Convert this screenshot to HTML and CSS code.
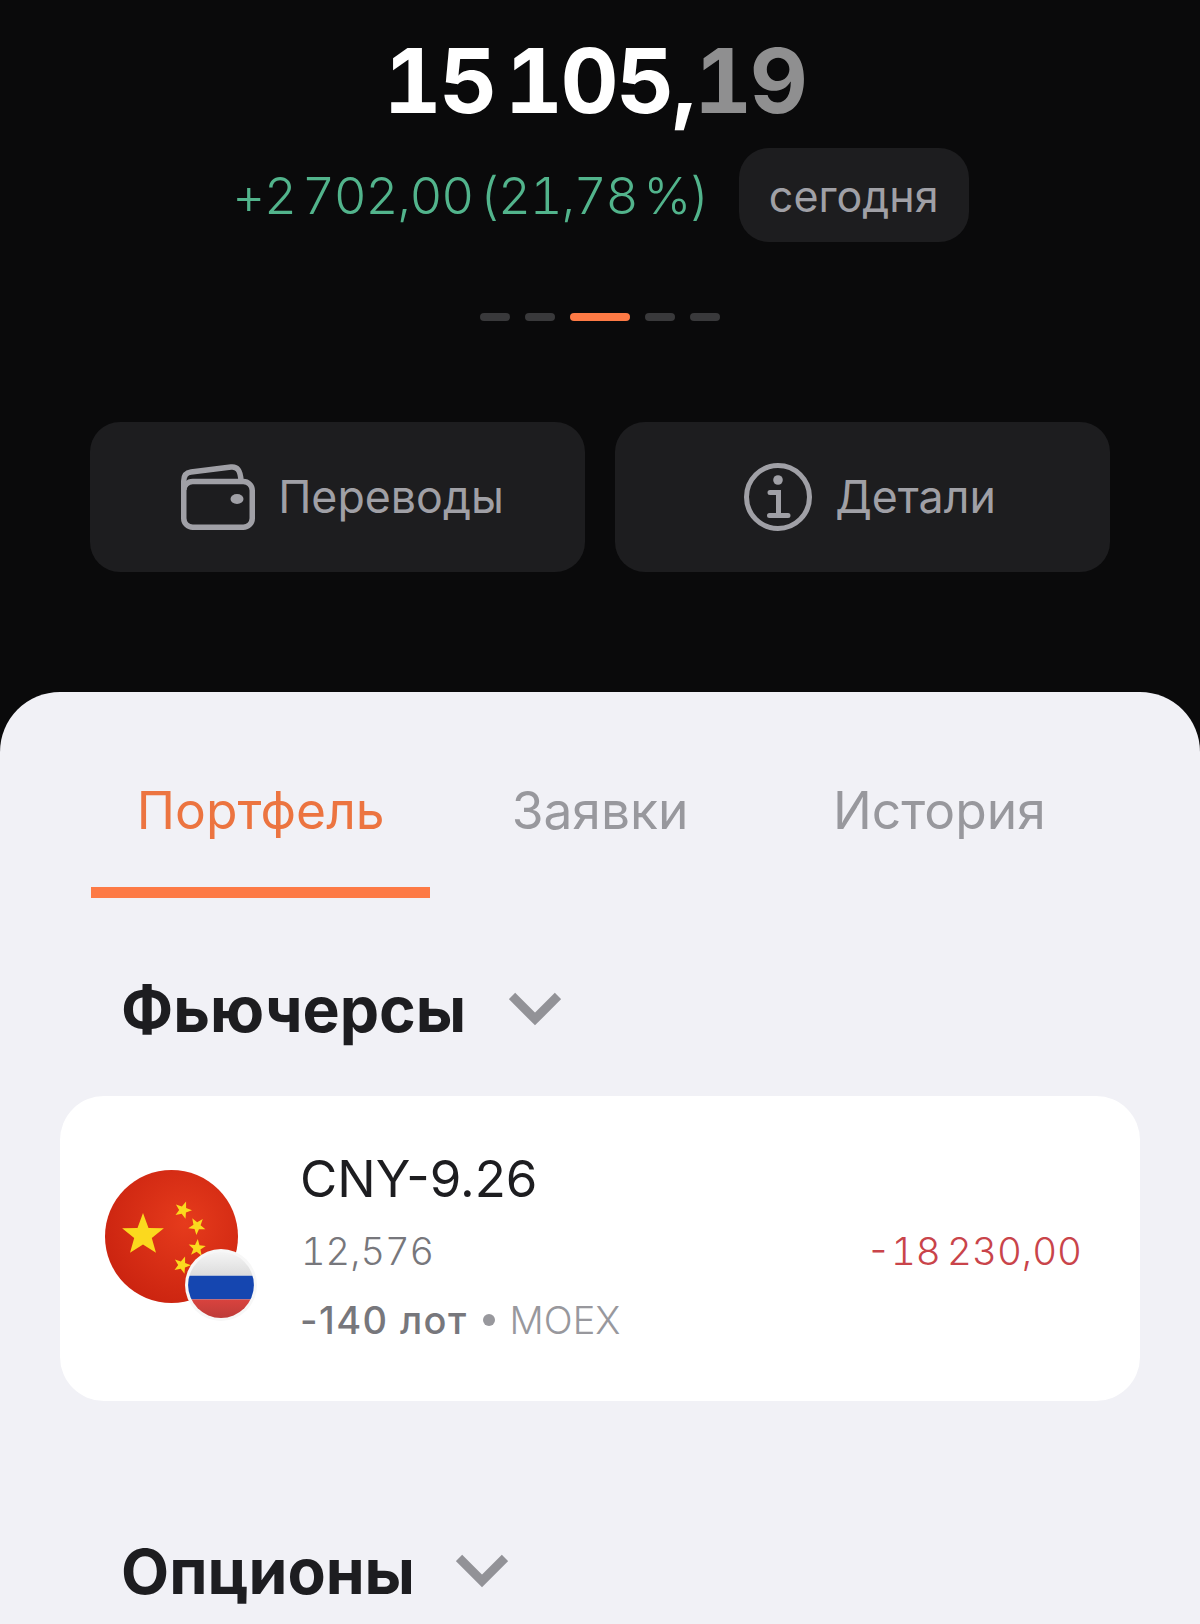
FILE: index.html
```html
<!DOCTYPE html>
<html lang="ru">
<head>
  <meta charset="UTF-8" />
  <meta name="viewport" content="width=device-width, initial-scale=1.0" />
  <title>Портфель</title>
  <link rel="stylesheet" href="styles.css">
</head>
<body>
  <div class="screen">
    <div class="top">
      <div class="balance">15 105,<span class="cents">19</span></div>
      <div class="change-row">
        <span class="change">+2 702,00 (21,78 %)</span>
        <span class="period">сегодня</span>
      </div>
      <div class="dots">
        <span class="dot"></span>
        <span class="dot"></span>
        <span class="dot active"></span>
        <span class="dot"></span>
        <span class="dot"></span>
      </div>
      <div class="actions">
        <div class="action">
          <svg class="wallet-icon" viewBox="0 0 74 66" fill="none" stroke="#a0a0a6" stroke-width="5.5">
            <rect x="2.75" y="17.5" width="68.5" height="45.75" rx="9" />
            <path d="M2.75 26V17C2.75 11 6 8.5 10 8L50 3C56 2.3 59.5 6 60 17" />
            <ellipse cx="56" cy="35" rx="6.5" ry="5" fill="#a0a0a6" stroke="none" />
          </svg>
          <span>Переводы</span>
        </div>
        <div class="action">
          <svg class="info-icon" viewBox="0 0 68 68" fill="none" stroke="#a0a0a6" stroke-width="5">
            <circle cx="34" cy="34" r="31.5" />
            <circle cx="34" cy="17" r="4.8" fill="#a0a0a6" stroke="none" />
            <path d="M26 29.5H34.5V52M25.5 52.5H44" stroke-linecap="round" />
          </svg>
          <span>Детали</span>
        </div>
      </div>
    </div>

    <div class="sheet">
      <div class="tabs">
        <div class="tab active">Портфель</div>
        <div class="tab">Заявки</div>
        <div class="tab">История</div>
      </div>

      <div class="section-title">
        <span>Фьючерсы</span>
        <svg class="chevron" viewBox="0 0 52 34" fill="none" stroke="#929297" stroke-width="9">
          <path d="M3 4L26 27L49 4" />
        </svg>
      </div>

      <div class="card">
        <div class="flags">
          <svg class="flag-cn" viewBox="0 0 133 133">
            <defs>
              <radialGradient id="cnBg" cx="0.6" cy="0.4" r="0.7">
                <stop offset="0" stop-color="#e63b1c" />
                <stop offset="1" stop-color="#c9220f" />
              </radialGradient>
              <polygon id="star" points="0,-10 2.5,-3.2 9.5,-3.1 4,1.4 5.9,8.1 0,4.3 -5.9,8.1 -4,1.4 -9.5,-3.1 -2.5,-3.2" />
            </defs>
            <circle cx="66.5" cy="66.5" r="66.5" fill="url(#cnBg)" />
            <use href="#star" fill="#fbd91e" transform="translate(38 65) scale(2.2)" />
            <use href="#star" fill="#fbd91e" transform="translate(78 40) rotate(20) scale(0.9)" />
            <use href="#star" fill="#fbd91e" transform="translate(92 56) rotate(40) scale(0.9)" />
            <use href="#star" fill="#fbd91e" transform="translate(92 78) rotate(5) scale(0.9)" />
            <use href="#star" fill="#fbd91e" transform="translate(77 95) rotate(20) scale(0.9)" />
          </svg>
          <svg class="flag-ru" viewBox="0 0 70 70">
            <defs>
              <clipPath id="ruClip"><circle cx="35" cy="35" r="32" /></clipPath>
              <linearGradient id="ruWhite" x1="0" y1="0" x2="0" y2="1">
                <stop offset="0" stop-color="#f8f8f8" />
                <stop offset="1" stop-color="#dcdcdc" />
              </linearGradient>
              <linearGradient id="ruRed" x1="0" y1="0" x2="0" y2="1">
                <stop offset="0" stop-color="#d9433e" />
                <stop offset="1" stop-color="#b93a38" />
              </linearGradient>
            </defs>
            <circle cx="35" cy="35" r="35" fill="#f7f7f7" />
            <g clip-path="url(#ruClip)">
              <rect width="70" height="26" fill="url(#ruWhite)" />
              <rect y="26" width="70" height="23" fill="#1546b0" />
              <rect y="49" width="70" height="21" fill="url(#ruRed)" />
            </g>
          </svg>
        </div>
        <div class="info">
          <div class="ticker">CNY-9.26</div>
          <div class="price">12,576</div>
          <div class="meta"><b>-140 лот</b><i class="sep"></i>MOEX</div>
        </div>
        <div class="pnl">-18 230,00</div>
      </div>

      <div class="section-title options">
        <span>Опционы</span>
        <svg class="chevron" viewBox="0 0 52 34" fill="none" stroke="#929297" stroke-width="9">
          <path d="M3 4L26 27L49 4" />
        </svg>
      </div>
    </div>
  </div>
</body>
</html>
```

FILE: styles.css
```css
* {
  box-sizing: border-box;
}
body {
  margin: 0;
  font-family: Inter, Roboto, sans-serif;
  background: #0a0a0b;
}
.screen {
  width: 1200px;
  height: 1624px;
  overflow: hidden;
  display: flex;
  flex-direction: column;
}

.top {
  height: 692px;
  flex-shrink: 0;
  padding-top: 31px;
}
.balance {
  height: 100px;
  line-height: 100px;
  font-size: 90px;
  font-weight: 700;
  font-feature-settings: "tnum";
  color: #fff;
  text-align: center;
  letter-spacing: -2.4px;
  word-spacing: -12px;
  margin-left: -11px;
}
.cents {
  color: #8f8f90;
}
.change-row {
  display: flex;
  justify-content: center;
  align-items: center;
  gap: 30px;
  margin-top: 17px;
  margin-left: 1px;
}
.change {
  font-size: 51px;
  font-weight: 300;
  font-feature-settings: "tnum";
  letter-spacing: -1.3px;
  color: #52b48c;
  word-spacing: -6px;
}
.period {
  width: 230px;
  height: 94px;
  line-height: 96px;
  border-radius: 30px;
  background: #1d1d1f;
  color: #a0a0a6;
  font-size: 43px;
  text-align: center;
}
.dots {
  display: flex;
  justify-content: center;
  gap: 15px;
  margin-top: 71px;
}
.dot {
  width: 30px;
  height: 8px;
  border-radius: 4px;
  background: #39393b;
}
.dot.active {
  width: 60px;
  background: #fd7a45;
}
.actions {
  display: grid;
  grid-template-columns: 1fr 1fr;
  gap: 30px;
  padding: 0 90px;
  margin-top: 101px;
}
.action {
  height: 150px;
  padding-left: 10px;
  border-radius: 30px;
  background: #1d1d1f;
  color: #a0a0a6;
  font-size: 44.7px;
  display: flex;
  justify-content: center;
  align-items: center;
  gap: 23px;
}
.action + .action {
  padding-left: 15px;
}
.wallet-icon {
  width: 74px;
  height: 66px;
}
.info-icon {
  width: 68px;
  height: 68px;
}

.sheet {
  flex: 1;
  background: #f1f1f6;
  border-radius: 60px 60px 0 0;
}
.tabs {
  display: grid;
  grid-template-columns: repeat(3, 1fr);
  padding: 0 91px;
}
.tab {
  height: 206px;
  padding-top: 88px;
  font-size: 51.5px;
  line-height: 60px;
  color: #98989d;
  text-align: center;
}
.tab.active {
  color: #ec7440;
  border-bottom: 11px solid #fd7a45;
}
.section-title {
  display: flex;
  align-items: center;
  gap: 43px;
  padding-left: 121px;
  margin-top: 73px;
  font-size: 62.5px;
  font-weight: 700;
  line-height: 76px;
  color: #1d1d20;
}
.chevron {
  width: 52px;
  height: 34px;
}
.card {
  display: flex;
  align-items: center;
  height: 305px;
  margin: 49px 60px 0;
  padding: 0 58px 0 45px;
  border-radius: 44px;
  background: #fff;
}
.flags {
  position: relative;
  width: 152px;
  height: 158px;
  flex-shrink: 0;
}
.flag-cn {
  position: absolute;
  left: 0;
  top: 0;
  width: 133px;
  height: 133px;
}
.flag-ru {
  position: absolute;
  left: 80px;
  top: 79px;
  width: 72px;
  height: 72px;
}
.info {
  flex: 1;
  margin-left: 43px;
}
.ticker {
  font-size: 51px;
  line-height: 60px;
  color: #1d1d20;
  margin-top: -5px;
}
.price {
  font-size: 38px;
  font-weight: 300;
  font-feature-settings: "tnum";
  line-height: 46px;
  margin-top: 19px;
  margin-left: 1px;
  color: #77777c;
}
.meta {
  display: flex;
  align-items: center;
  font-size: 38px;
  font-weight: 300;
  line-height: 46px;
  margin-top: 23px;
  color: #98989d;
}
.meta b {
  font-weight: 500;
  letter-spacing: 1.4px;
  color: #77777c;
}
.sep {
  width: 12px;
  height: 12px;
  border-radius: 50%;
  background: #98989d;
  margin: 0 15px;
}
.pnl {
  margin-top: 5px;
  font-size: 38.5px;
  font-weight: 300;
  font-feature-settings: "tnum";
  word-spacing: -4px;
  color: #c9444a;
}
.section-title.options {
  margin-top: 132px;
  gap: 41px;
}
```
